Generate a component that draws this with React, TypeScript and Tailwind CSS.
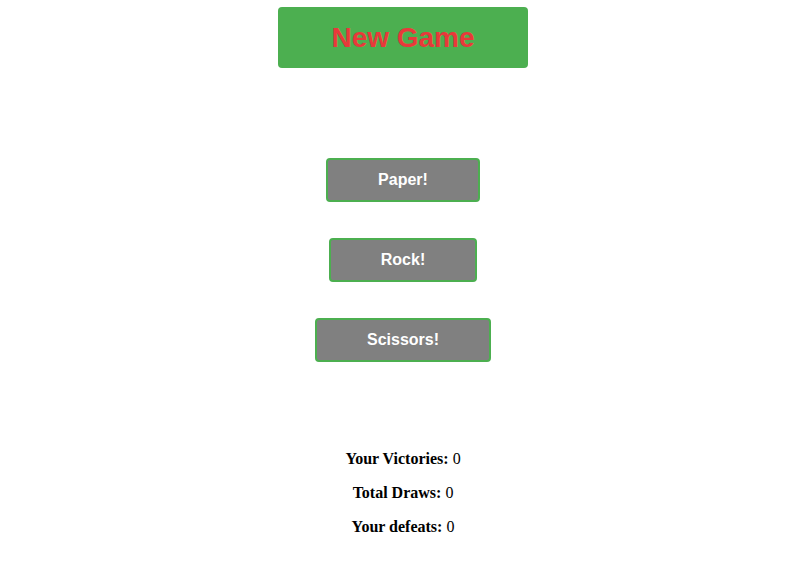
import { useState } from 'react';

type Move = 'Paper' | 'Rock' | 'Scissors';

const moves: Move[] = ['Paper', 'Rock', 'Scissors'];

export default function App() {
  const [victories, setVictories] = useState(0);
  const [draws, setDraws] = useState(0);
  const [defeats, setDefeats] = useState(0);

  const play = (move: Move) => {
    const cpu = moves[Math.floor(Math.random() * 3)];
    if (cpu === move) setDraws(draws + 1);
    else if (
      (move === 'Paper' && cpu === 'Rock') ||
      (move === 'Rock' && cpu === 'Scissors') ||
      (move === 'Scissors' && cpu === 'Paper')
    )
      setVictories(victories + 1);
    else setDefeats(defeats + 1);
  };

  const reset = () => {
    setVictories(0);
    setDraws(0);
    setDefeats(0);
  };

  return (
    <div className="min-h-screen bg-white pl-5 flex flex-col items-center font-['Liberation_Sans',Arial,sans-serif]">
      <button
        onClick={reset}
        className="mt-[7px] w-[250px] h-[61px] rounded-[4px] bg-[#4caf50] text-[#e8393a] text-[28px] font-bold"
      >
        New Game
      </button>

      <div className="mt-[90px] flex flex-col items-center gap-[36px]">
        {moves.map((m) => (
          <button
            key={m}
            onClick={() => play(m)}
            className="h-[44px] px-[50px] rounded-[4px] border-2 border-[#4caf50] bg-[#808080] text-white text-base font-bold"
          >
            {m}!
          </button>
        ))}
      </div>

      <div className="mt-[88px] flex flex-col items-center gap-4 text-black text-base leading-[18px] font-['Liberation_Serif','Times_New_Roman',serif]">
        <p>
          <b>Your Victories:</b> {victories}
        </p>
        <p>
          <b>Total Draws:</b> {draws}
        </p>
        <p>
          <b>Your defeats:</b> {defeats}
        </p>
      </div>
    </div>
  );
}
